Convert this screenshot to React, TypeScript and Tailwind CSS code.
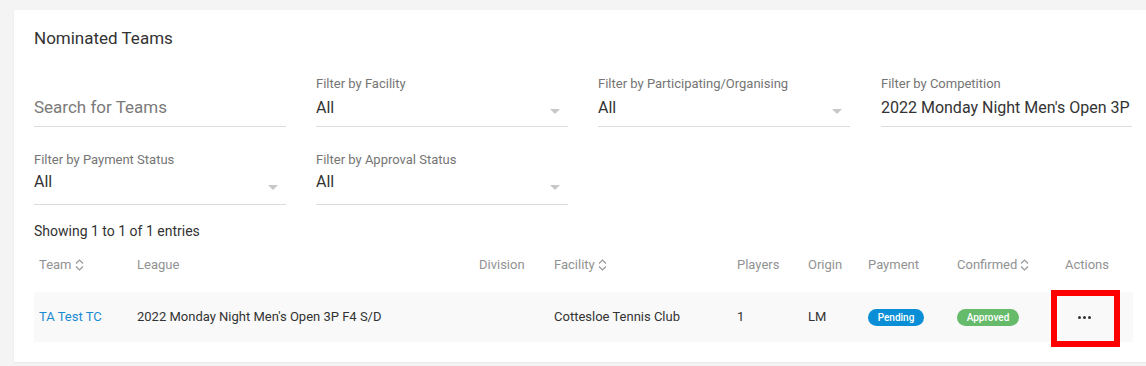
import React from 'react';

const FONT = "font-['Roboto','Liberation_Sans',sans-serif]";

interface SelectFieldProps {
  label: string;
  value: string;
  arrow?: boolean;
  compact?: boolean;
}

const SelectField: React.FC<SelectFieldProps> = ({ label, value, arrow = true, compact = false }) => (
  <div className={`relative border-b border-[#dcdcdc] ${compact ? 'h-[52px]' : 'h-[51px]'}`}>
    <div className={`${compact ? '' : 'pt-[1px]'} text-[13px] leading-[14px] text-[#757575]`}>{label}</div>
    <div className={`${compact ? 'mt-[5px]' : 'mt-[7px]'} text-[16px] leading-[20px] text-[#333]`}>{value}</div>
    {arrow && (
      <span
        className={`absolute right-[8px] ${compact ? 'top-[32px]' : 'top-[33px]'} w-0 h-0 border-l-[5px] border-r-[5px] border-t-[5px] border-l-transparent border-r-transparent border-t-[#c8c8c8]`}
      />
    )}
  </div>
);

const SortIcon = () => (
  <svg className="inline-block ml-[3px] -mt-[2px]" width="9" height="12" viewBox="0 0 9 12" fill="none" stroke="#999" strokeWidth="1.2">
    <path d="M1 4.5 L4.5 1 L8 4.5" />
    <path d="M1 7.5 L4.5 11 L8 7.5" />
  </svg>
);

const COLS = 'grid grid-cols-[98px_342px_75px_183px_71px_60px_89px_88px_93px]';

export default function App() {
  return (
    <div className={`${FONT} bg-[#f4f4f4] w-[1146px] h-[366px] pt-[10px] pl-[14px] overflow-hidden`}>
      <div className="bg-white h-[352px] w-[1160px] shadow-[0_1px_2px_rgba(0,0,0,0.06)] pl-[20px] pt-[17px]">
        <h2 className="text-[17px] leading-[22px] text-[#333] font-normal">Nominated Teams</h2>

        <div className="mt-[27px] grid grid-cols-[252px_252px_252px_252px] gap-x-[30px] gap-y-[26px]">
          <div className="border-b border-[#dcdcdc] h-[51px]">
            <div className="pt-[21px] text-[17px] leading-[21px] text-[#7a7a7a]">Search for Teams</div>
          </div>
          <SelectField label="Filter by Facility" value="All" />
          <SelectField label="Filter by Participating/Organising" value="All" />
          <div className="pl-[1px]">
            <SelectField label="Filter by Competition" value="2022 Monday Night Men's Open 3P" arrow={false} />
          </div>
          <SelectField label="Filter by Payment Status" value="All" compact />
          <SelectField label="Filter by Approval Status" value="All" compact />
        </div>

        <div className="mt-[18px] text-[14px] leading-[16px] text-[#333]">Showing 1 to 1 of 1 entries</div>

        <div className="mt-[18px] w-[1099px]">
          <div className={`${COLS} text-[13px] leading-[16px] text-[#929292] h-[28px] items-start`}>
            <div className="pl-[5px]">Team<SortIcon /></div>
            <div className="pl-[5px]">League</div>
            <div className="pl-[5px]">Division</div>
            <div className="pl-[5px]">Facility<SortIcon /></div>
            <div className="pl-[5px]">Players</div>
            <div className="pl-[5px]">Origin</div>
            <div className="pl-[5px]">Payment</div>
            <div className="pl-[5px]">Confirmed<SortIcon /></div>
            <div className="pl-[25px]">Actions</div>
          </div>
          <div className={`${COLS} mt-[7px] h-[50px] items-center bg-[#f9f9f9] text-[13px] text-[#333]`}>
            <div className="pl-[5px] text-[#1b8ad3]">TA Test TC</div>
            <div className="pl-[5px]">2022 Monday Night Men's Open 3P F4 S/D</div>
            <div className="pl-[5px]"></div>
            <div className="pl-[5px]">Cottesloe Tennis Club</div>
            <div className="pl-[5px]">1</div>
            <div className="pl-[5px]">LM</div>
            <div className="pl-[5px]">
              <span className="inline-flex items-center justify-center w-[56px] h-[17px] rounded-full bg-[#0a8fd6] text-white text-[10px] font-medium">Pending</span>
            </div>
            <div className="pl-[5px]">
              <span className="inline-flex items-center justify-center w-[62px] h-[17px] rounded-full bg-[#66bb6a] text-white text-[10px] font-medium">Approved</span>
            </div>
            <div className="relative h-full">
              <span className="absolute left-[38px] top-[24px] flex gap-[2px]">
                <span className="w-[3px] h-[3px] rounded-full bg-[#333]" />
                <span className="w-[3px] h-[3px] rounded-full bg-[#333]" />
                <span className="w-[3px] h-[3px] rounded-full bg-[#333]" />
              </span>
              <span className="absolute left-[11px] -top-[2px] w-[69px] h-[57px] border-[6px] border-[#ff0000]" />
            </div>
          </div>
        </div>
      </div>
    </div>
  );
}
